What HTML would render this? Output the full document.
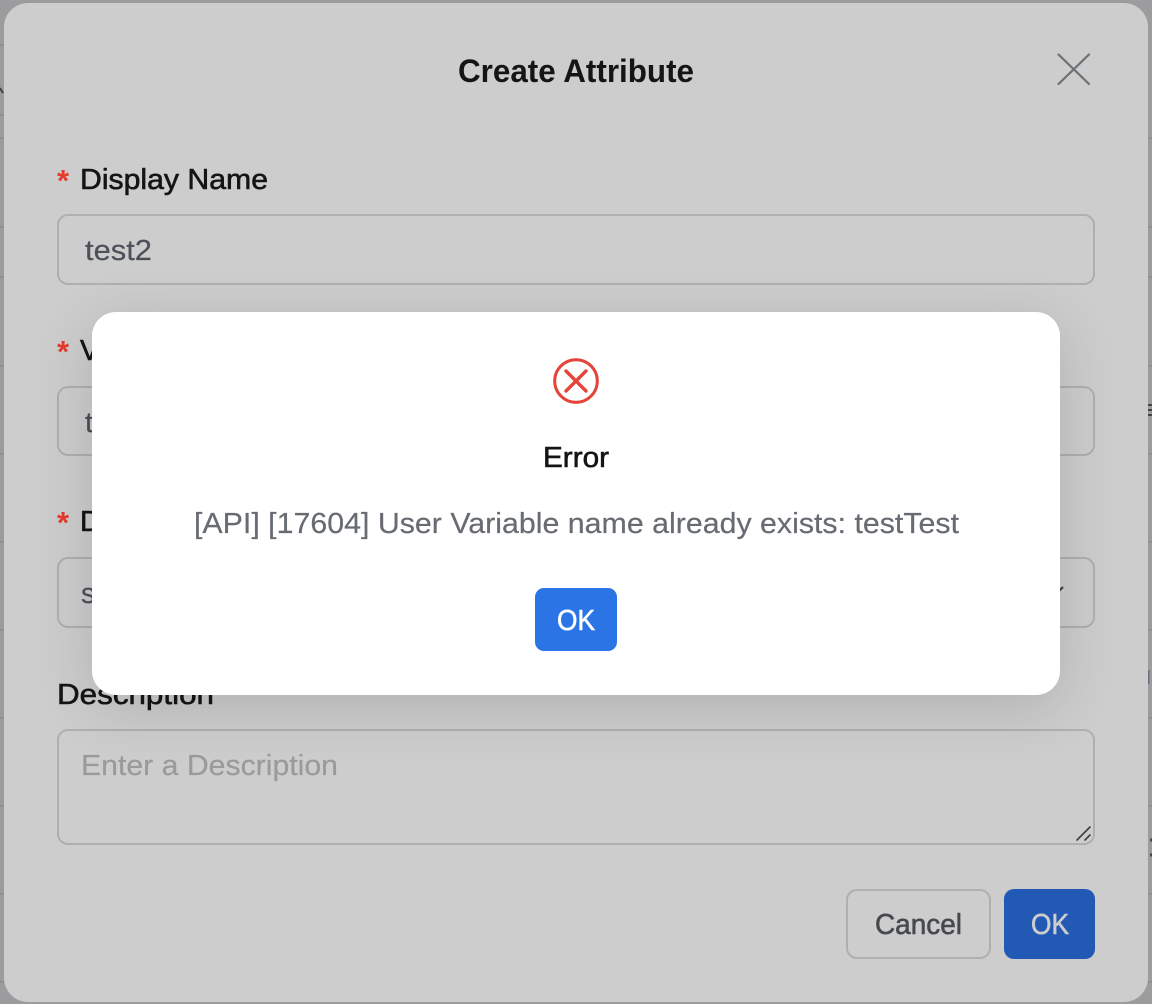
<!DOCTYPE html>
<html><head><meta charset="utf-8"><title>Create Attribute</title>
<style>
html,body{margin:0;padding:0;width:1152px;height:1004px;overflow:hidden;background:#9c9c9e}
svg{position:absolute;left:0;top:0;display:block}
text{font-family:"Liberation Sans",sans-serif;font-size:29px;stroke-width:.2px}
.med{stroke-width:.6px}
.ast{font-size:31px;font-weight:700;fill:#e63b2e;stroke-width:0}
.dialog{position:absolute;left:92px;top:312px;width:968px;height:383px;border-radius:24px;background:#fff;box-shadow:0 12px 60px rgba(0,0,0,.14)}
</style></head>
<body>
<svg width="1152" height="1004" viewBox="0 0 1152 1004">
<g stroke="#8b909b" stroke-width="2">
<path d="M0 45H4M0 115H4M0 138H4M0 227H4M0 277H4M0 366H4M0 454H4M0 542H4M0 630H4M0 718H4M0 806H4M0 894H4M0 982H4"/>
<path d="M1148 138H1152M1148 227H1152M1148 277H1152M1148 366H1152M1148 454H1152M1148 542H1152M1148 630H1152M1148 718H1152M1148 806H1152M1148 894H1152M1148 982H1152"/>
</g>
<path d="M0 88L3 93" stroke="#444" stroke-width="2" fill="none"/>
<path d="M1148 405h4M1148 410h4M1148 415h4" stroke="#444" stroke-width="2"/>
<path d="M1148 670v14" stroke="#687080" stroke-width="3"/>
<path d="M1150 840h2M1150 855h2" stroke="#444" stroke-width="3"/>
<rect x="4" y="3" width="1144" height="999" rx="24" fill="#cdcdcd"/>

<text x="458" y="82" textLength="236" lengthAdjust="spacingAndGlyphs" font-weight="700" fill="#141517" style="font-size:32px;stroke-width:0">Create Attribute</text>
<path d="M1058.500 54.500L1089 84M1089 54.500L1058.500 84" stroke="#6b7075" stroke-width="2.200" stroke-linecap="round" fill="none"/>

<text class="ast" x="57" y="191">*</text>
<text class="ast" x="57" y="362">*</text>
<text class="ast" x="57" y="533">*</text>
<g fill="#141517" stroke="#141517">
<text class="med" x="80" y="189" textLength="188" lengthAdjust="spacingAndGlyphs">Display Name</text>
<text class="med" x="80" y="360">V</text>
<text class="med" x="80" y="531">D</text>
<text class="med" x="57" y="704" textLength="157" lengthAdjust="spacingAndGlyphs">Description</text>
</g>

<g fill="none" stroke="#abacb0" stroke-width="1.800">
<rect x="58" y="215" width="1036" height="69" rx="10"/>
<rect x="58" y="387" width="1036" height="68" rx="10"/>
<rect x="58" y="558" width="1036" height="69" rx="10"/>
<rect x="58" y="730" width="1036" height="114" rx="10"/>
</g>
<g fill="#4c5058" stroke="#4c5058">
<text x="85" y="260" textLength="67" lengthAdjust="spacingAndGlyphs">test2</text>
<text x="85" y="432">t</text>
<text x="81" y="603">s</text>
</g>
<text x="81" y="775" textLength="257" lengthAdjust="spacingAndGlyphs" fill="#9a9a9c" stroke="#9a9a9c">Enter a Description</text>
<path d="M1077 840L1090 827M1085 840L1090 835" stroke="#3d3f44" stroke-width="1.600" fill="none" stroke-linecap="round"/>
<path d="M1059 591L1063 587" stroke="#3d3f44" stroke-width="2" fill="none"/>

<rect x="847" y="890" width="143" height="68" rx="10" fill="none" stroke="#abacb0" stroke-width="1.800"/>
<text class="med" x="875" y="934" textLength="87" lengthAdjust="spacingAndGlyphs" fill="#46494e" stroke="#46494e">Cancel</text>
<rect x="1004" y="889" width="91" height="70" rx="10" fill="#2159b4"/>
<text class="med" x="1031" y="934" textLength="38" lengthAdjust="spacingAndGlyphs" fill="#cdcdcd" stroke="#cdcdcd">OK</text>
</svg>

<div class="dialog"></div>
<svg width="1152" height="1004" viewBox="0 0 1152 1004">
<circle cx="576" cy="381" r="21.300" fill="none" stroke="#e5443a" stroke-width="3"/>
<path d="M566 371L586 391M586 371L566 391" stroke="#e5443a" stroke-width="3.400" stroke-linecap="round" fill="none"/>
<text class="med" x="543" y="467" textLength="66" lengthAdjust="spacingAndGlyphs" fill="#141517" stroke="#141517">Error</text>
<text x="194" y="533" textLength="765" lengthAdjust="spacingAndGlyphs" fill="#676b72" stroke="#676b72">[API] [17604] User Variable name already exists: testTest</text>
<rect x="535" y="588" width="82" height="63" rx="9" fill="#2b74e6"/>
<text class="med" x="557" y="630" textLength="38" lengthAdjust="spacingAndGlyphs" fill="#fff" stroke="#fff">OK</text>
</svg>
</body></html>
